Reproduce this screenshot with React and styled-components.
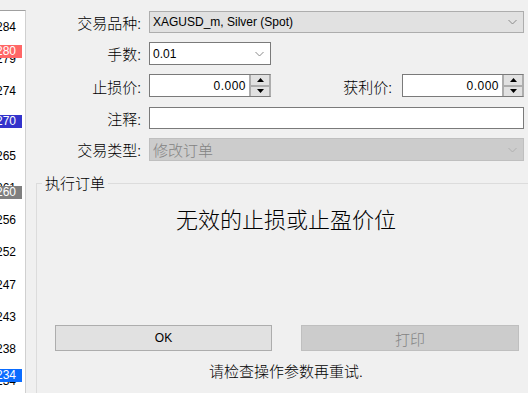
import React from 'react';
import styled, { createGlobalStyle } from 'styled-components';

const GlobalStyle = createGlobalStyle`
  html, body {
    margin: 0;
    padding: 0;
    background: #f0f0f0;
  }
  body {
    font-family: "Liberation Sans", "Noto Sans CJK SC", sans-serif;
    color: #000;
  }
`;

const ticks = ['24.284', '24.279', '24.274', '24.270', '24.265', '24.261', '24.256', '24.252', '24.247', '24.243', '24.238', '24.234'];

const badges = [
  { value: '24.280', top: 34, color: '#ff6666' },
  { value: '24.270', top: 104, color: '#3333cc' },
  { value: '24.260', top: 175, color: '#7f7f7f' },
  { value: '24.234', top: 358, color: '#0a6cff' },
];

const Chevron = ({ color = '#808080' }) => (
  <svg width="9" height="6" viewBox="0 0 9 6">
    <polyline points="0.5,1 4.5,5 8.5,1" fill="none" stroke={color} strokeWidth="1" />
  </svg>
);

const Arrow = ({ down }) => (
  <svg width="7" height="4" viewBox="0 0 7 4">
    <polygon points={down ? '0,0 7,0 3.5,4' : '0,4 7,4 3.5,0'} fill="#000" />
  </svg>
);

const Spin = ({ value }) => (
  <SpinBox>
    <SpinValue>{value}</SpinValue>
    <SpinButtons>
      <SpinButton><Arrow /></SpinButton>
      <SpinButton><Arrow down /></SpinButton>
    </SpinButtons>
  </SpinBox>
);

export default function App() {
  return (
    <Page>
      <GlobalStyle />
      <PriceScale>
        {ticks.map((t) => (
          <Tick key={t}>{t}</Tick>
        ))}
        {badges.map((b) => (
          <Badge key={b.value} $color={b.color} style={{ top: b.top }}>
            {b.value}
          </Badge>
        ))}
      </PriceScale>

      <Main>
        <Form>
          <Label>交易品种:</Label>
          <Combo $wide>
            <span>XAGUSD_m, Silver (Spot)</span>
            <Chevron color="#8a8a8a" />
          </Combo>

          <Label>手数:</Label>
          <Combo $white>
            <span>0.01</span>
            <Chevron color="#8a8a8a" />
          </Combo>

          <Label>止损价:</Label>
          <Spin value="0.000" />
          <Label $col={4}>获利价:</Label>
          <Spin value="0.000" />

          <Label>注释:</Label>
          <TextInput $wide />

          <Label>交易类型:</Label>
          <Combo $wide $disabled>
            <span>修改订单</span>
            <Chevron color="#b0b0b0" />
          </Combo>
        </Form>

        <Group>
          <Legend>执行订单</Legend>
          <Message>无效的止损或止盈价位</Message>
          <Buttons>
            <Button>OK</Button>
            <Button $disabled>打印</Button>
          </Buttons>
          <Hint>请检查操作参数再重试.</Hint>
        </Group>
      </Main>
    </Page>
  );
}

const Page = styled.div`
  display: flex;
  width: 528px;
  height: 393px;
  overflow: hidden;
  background: #f0f0f0;
`;

const PriceScale = styled.div`
  position: relative;
  flex-shrink: 0;
  width: 25px;
  margin-top: 10px;
  border-top: 1px solid #a0a0a0;
  border-right: 1px solid #d0d0d0;
  background: #fff;
  overflow: hidden;
  display: flex;
  flex-direction: column;
`;

const Tick = styled.div`
  height: 32.2px;
  line-height: 32px;
  font-size: 12px;
  text-align: right;
  padding-right: 9px;
  white-space: nowrap;
  direction: rtl;
  flex-shrink: 0;
`;

const Badge = styled.div`
  position: absolute;
  left: 0;
  width: 22px;
  height: 13px;
  line-height: 13px;
  font-size: 12px;
  color: #fff;
  background: ${(p) => p.$color};
  text-align: right;
  padding-right: 6px;
  box-sizing: border-box;
  white-space: nowrap;
  direction: rtl;
  overflow: hidden;
`;

const Main = styled.div`
  flex: 1;
  display: flex;
  flex-direction: column;
  min-width: 0;
`;

const Form = styled.div`
  display: grid;
  grid-template-columns: 115px 122px 1fr auto 122px;
  grid-template-rows: 22px 23px 24px 22px 23px;
  column-gap: 8px;
  row-gap: 9px;
  padding: 11px 4px 0 0;
`;

const Label = styled.div`
  grid-column: ${(p) => p.$col || 1};
  display: flex;
  align-items: center;
  justify-content: flex-end;
  font-family: "Noto Sans CJK SC", sans-serif;
  font-weight: 300;
  font-size: 15px;
  padding-right: ${(p) => (p.$col ? '2px' : '0')};
`;

const Combo = styled.div`
  grid-column: ${(p) => (p.$wide ? '2 / -1' : 'auto')};
  display: flex;
  align-items: center;
  justify-content: space-between;
  box-sizing: border-box;
  padding: 0 6px 0 3px;
  font-size: 12px;
  background: ${(p) => (p.$white ? '#fff' : p.$disabled ? '#cccccc' : '#e1e1e1')};
  border: 1px solid ${(p) => (p.$white ? '#7a7a7a' : p.$disabled ? '#bfbfbf' : '#adadad')};
  color: ${(p) => (p.$disabled ? '#838383' : '#000')};

  span {
    font-family: ${(p) => (p.$disabled ? '"Noto Sans CJK SC", sans-serif' : 'inherit')};
    font-weight: ${(p) => (p.$disabled ? 300 : 400)};
    font-size: ${(p) => (p.$disabled ? '15px' : '12px')};
  }
`;

const TextInput = styled.div`
  grid-column: ${(p) => (p.$wide ? '2 / -1' : 'auto')};
  background: #fff;
  border: 1px solid #7a7a7a;
`;

const SpinBox = styled.div`
  display: flex;
  background: #fff;
  border: 1px solid #7a7a7a;
  border-right-color: #adadad;
  height: 23px;
  box-sizing: border-box;
`;

const SpinValue = styled.div`
  flex: 1;
  display: flex;
  align-items: center;
  justify-content: flex-end;
  padding-right: 3px;
  font-size: 12px;
  letter-spacing: 0.5px;
`;

const SpinButtons = styled.div`
  width: 20px;
  display: flex;
  flex-direction: column;
  border-left: 1px solid #adadad;
  background: #f0f0f0;
`;

const SpinButton = styled.div`
  flex: 1;
  display: flex;
  align-items: center;
  justify-content: center;
  background: #e1e1e1;
  border: 1px solid #adadad;
  &:first-child {
    border-top: none;
  }
  &:last-child {
    border-bottom: none;
  }
`;

const Group = styled.fieldset`
  flex: 1;
  margin: 12px 0 0 10px;
  padding: 0 11px 0 18px;
  border: none;
  border-top: 1px solid #dcdcdc;
  border-left: 1px solid #dcdcdc;
  display: flex;
  flex-direction: column;
  min-width: 0;
`;

const Legend = styled.legend`
  margin-left: -13px;
  padding: 0 3px;
  font-family: "Noto Sans CJK SC", sans-serif;
  font-weight: 300;
  font-size: 15px;
  line-height: 20px;
`;

const Message = styled.div`
  margin-top: 11px;
  text-align: center;
  font-family: "Noto Sans CJK SC", sans-serif;
  font-weight: 300;
  font-size: 22px;
  line-height: 28px;
`;

const Buttons = styled.div`
  display: flex;
  gap: 29px;
  margin-top: 93px;
`;

const Button = styled.div`
  width: ${(p) => (p.$disabled ? '218px' : '217px')};
  flex-shrink: 0;
  height: 26px;
  box-sizing: border-box;
  display: flex;
  align-items: center;
  justify-content: center;
  background: ${(p) => (p.$disabled ? '#cccccc' : '#e1e1e1')};
  border: 1px solid ${(p) => (p.$disabled ? '#bfbfbf' : '#adadad')};
  color: ${(p) => (p.$disabled ? '#838383' : '#000')};
  font-family: ${(p) => (p.$disabled ? '"Noto Sans CJK SC", sans-serif' : 'inherit')};
  font-weight: ${(p) => (p.$disabled ? 300 : 400)};
  font-size: ${(p) => (p.$disabled ? '15px' : '12px')};
`;

const Hint = styled.div`
  margin-top: 10px;
  text-align: center;
  font-family: "Noto Sans CJK SC", sans-serif;
  font-weight: 300;
  font-size: 15px;
  line-height: 20px;
`;
